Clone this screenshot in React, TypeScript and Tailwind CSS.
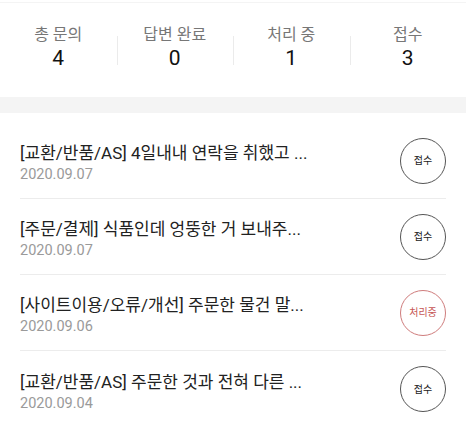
const stats = [
  { label: '총 문의', value: 4 },
  { label: '답변 완료', value: 0 },
  { label: '처리 중', value: 1 },
  { label: '접수', value: 3 },
]

const inquiries = [
  { title: '[교환/반품/AS] 4일내내 연락을 취했고 ...', date: '2020.09.07', status: '접수' },
  { title: '[주문/결제] 식품인데 엉뚱한 거 보내주...', date: '2020.09.07', status: '접수' },
  { title: '[사이트이용/오류/개선] 주문한 물건 말...', date: '2020.09.06', status: '처리중' },
  { title: '[교환/반품/AS] 주문한 것과 전혀 다른 ...', date: '2020.09.04', status: '접수' },
]

export default function App() {
  return (
    <div className="w-[466px] h-[425px] overflow-hidden bg-white font-['Roboto','Noto_Sans_CJK_KR',sans-serif]">
      <div className="h-[3px] border-b border-[#f4f4f4]" />
      <div className="grid grid-cols-4 h-[94px] pt-[22px]">
        {stats.map((s, i) => (
          <div key={i} className="relative flex flex-col items-center">
            {i > 0 && <span className="absolute left-0 top-[11px] h-[29px] w-px bg-[#ebebeb]" />}
            <span className="text-[16px] leading-[20px] text-[#777]">{s.label}</span>
            <span className="text-[21px] leading-[26px] text-[#111]">{s.value}</span>
          </div>
        ))}
      </div>
      <div className="h-[16px] bg-[#f4f4f4]" />
      <div className="px-5 pt-[10px]">
        {inquiries.map((q, i) => (
          <InquiryRow key={i} {...q} last={i === inquiries.length - 1} />
        ))}
      </div>
    </div>
  )
}

function InquiryRow({ title, date, status, last }: { title: string; date: string; status: string; last: boolean }) {
  const processing = status === '처리중'
  return (
    <div className={`flex items-center justify-between h-[76px] ${last ? '' : 'border-b border-[#ececec]'}`}>
      <div className="flex flex-col pt-[6px]">
        <span className="text-[17px] leading-[22px] text-[#222]">{title}</span>
        <span className="text-[14.5px] leading-[21px] text-[#9a9a9a]">{date}</span>
      </div>
      <span
        className={`flex items-center justify-center w-[46px] h-[46px] rounded-full border text-[10px] ${
          processing ? 'border-[#cf7c7c] text-[#c65454]' : 'border-[#555] text-[#222]'
        }`}
      >
        {status}
      </span>
    </div>
  )
}
